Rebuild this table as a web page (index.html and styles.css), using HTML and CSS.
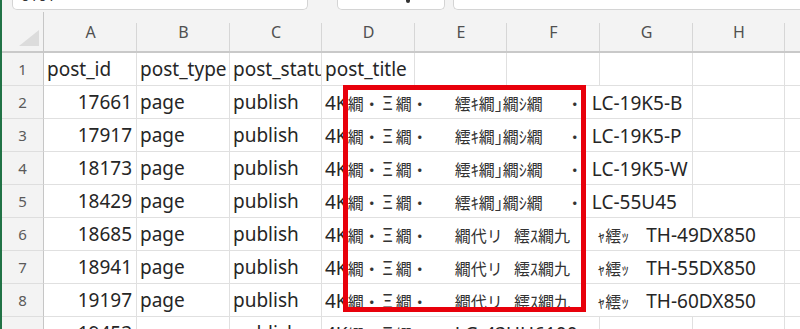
FILE: index.html
```html
<!DOCTYPE html>
<html lang="ja">
<head>
<meta charset="utf-8">
<title>Sheet</title>
<link rel="stylesheet" href="styles.css">
</head>
<body>
<div class="app">
  <div class="topbar">
    <div class="box namebox"><span class="clipped">0101</span></div>
    <div class="box fxbox"><span class="chev"></span></div>
    <div class="box formula"></div>
  </div>
  <div class="sheet">
    <div class="corner"></div>
    <div class="ch">A</div><div class="ch">B</div><div class="ch">C</div><div class="ch">D</div><div class="ch">E</div><div class="ch">F</div><div class="ch">G</div><div class="ch">H</div><div class="ch"></div>

    <div class="rh">1</div>
    <div class="c">post_id</div><div class="c">post_type</div><div class="c">post_status</div><div class="c">post_title</div><div class="c"></div><div class="c"></div><div class="c"></div><div class="c"></div><div class="c"></div>

    <div class="rh">2</div>
    <div class="c num">17661</div><div class="c">page</div><div class="c">publish</div>
    <div class="c s4">4K<span class="jp">繝・<span class="gk">Ξ</span>繝・&#8195;&#8194;&#8201;繧ｷ繝｣繝ｼ繝&#8195;&#8194;・&#8194;&#8202;</span>LC-19K5-B</div><div class="c"></div><div class="c"></div>

    <div class="rh">3</div>
    <div class="c num">17917</div><div class="c">page</div><div class="c">publish</div>
    <div class="c s4">4K<span class="jp">繝・<span class="gk">Ξ</span>繝・&#8195;&#8194;&#8201;繧ｷ繝｣繝ｼ繝&#8195;&#8194;・&#8194;&#8202;</span>LC-19K5-P</div><div class="c"></div><div class="c"></div>

    <div class="rh">4</div>
    <div class="c num">18173</div><div class="c">page</div><div class="c">publish</div>
    <div class="c s4">4K<span class="jp">繝・<span class="gk">Ξ</span>繝・&#8195;&#8194;&#8201;繧ｷ繝｣繝ｼ繝&#8195;&#8194;・&#8194;&#8202;</span>LC-19K5-W</div><div class="c"></div><div class="c"></div>

    <div class="rh">5</div>
    <div class="c num">18429</div><div class="c">page</div><div class="c">publish</div>
    <div class="c s4">4K<span class="jp">繝・<span class="gk">Ξ</span>繝・&#8195;&#8194;&#8201;繧ｷ繝｣繝ｼ繝&#8195;&#8194;・&#8194;&#8202;</span>LC-55U45</div><div class="c"></div><div class="c"></div>

    <div class="rh">6</div>
    <div class="c num">18685</div><div class="c">page</div><div class="c">publish</div>
    <div class="c s5">4K<span class="jp">繝・<span class="gk">Ξ</span>繝・&#8195;&#8194;&#8201;繝代リ&#8194;&#8201;繧ｽ繝九&#8195;&#8194;&#8201;ｬ繧ｯ&#8195;&#8202;</span>TH-49DX850</div><div class="c"></div>

    <div class="rh">7</div>
    <div class="c num">18941</div><div class="c">page</div><div class="c">publish</div>
    <div class="c s5">4K<span class="jp">繝・<span class="gk">Ξ</span>繝・&#8195;&#8194;&#8201;繝代リ&#8194;&#8201;繧ｽ繝九&#8195;&#8194;&#8201;ｬ繧ｯ&#8195;&#8202;</span>TH-55DX850</div><div class="c"></div>

    <div class="rh">8</div>
    <div class="c num">19197</div><div class="c">page</div><div class="c">publish</div>
    <div class="c s5">4K<span class="jp">繝・<span class="gk">Ξ</span>繝・&#8195;&#8194;&#8201;繝代リ&#8194;&#8201;繧ｽ繝九&#8195;&#8194;&#8201;ｬ繧ｯ&#8195;&#8202;</span>TH-60DX850</div><div class="c"></div>

    <div class="rh">9</div>
    <div class="c num">19453</div><div class="c">page</div><div class="c">publish</div>
    <div class="c s3">4K<span class="jp">繝・<span class="gk">Ξ</span>繝・&#8195;&#8194;&#8201;</span>LG-43UH6100</div><div class="c"></div><div class="c"></div><div class="c"></div>
  </div>
  <div class="highlight"></div>
</div>
</body>
</html>
```

FILE: styles.css
```css
* { box-sizing: border-box; }
html, body { margin: 0; padding: 0; }
body {
  width: 800px;
  height: 329px;
  overflow: hidden;
  background: #ffffff;
  font-family: "Noto Sans", "Noto Sans CJK JP", sans-serif;
}
.app {
  position: relative;
  width: 800px;
  height: 329px;
  overflow: hidden;
  border-left: 2px solid #217346;
  background: #f3f3f3;
}
.topbar {
  height: 12px;
  display: flex;
  align-items: flex-start;
  background: #f3f3f3;
}
.box {
  height: 10px;
  background: #ffffff;
  border: 1px solid #d4d4d4;
  border-top: none;
  border-radius: 0 0 5px 5px;
  position: relative;
  overflow: hidden;
}
.namebox { margin-left: 10px; width: 296px; }
.fxbox { margin-left: 29px; width: 108px; }
.formula { margin-left: 8px; flex: 1; border-right: none; border-radius: 0 0 0 5px; }
.clipped {
  display: block;
  margin-top: -12px;
  margin-left: 8px;
  font-size: 15px;
  line-height: 15px;
  color: #333;
}
.chev {
  display: block;
  width: 4px;
  height: 3px;
  margin: 0 0 0 68px;
  background: #333;
  border-radius: 0 0 2px 2px;
}
.sheet {
  display: grid;
  grid-template-columns: 42px 93px 93px 92px 93px 92px 93px 93px 92px 93px;
  grid-template-rows: 41px repeat(9, 33px);
  width: 876px;
  background: #ffffff;
}
.corner {
  background: #f3f3f3;
  border-right: 1px solid #c6c6c6;
  border-bottom: 2px solid #c9c9c9;
  position: relative;
}
.corner::after {
  content: "";
  position: absolute;
  right: 4px;
  bottom: 5px;
  width: 20px;
  height: 16px;
  background: #dcdcdc;
  clip-path: polygon(100% 0, 100% 100%, 0 100%);
}
.ch {
  position: relative;
  background: #f3f3f3;
  border-bottom: 2px solid #c9c9c9;
  color: #505050;
  font-size: 16px;
  text-align: center;
  line-height: 40px;
}
.ch::after {
  content: "";
  position: absolute;
  right: 0;
  top: 11px;
  bottom: 0;
  width: 1px;
  background: #d6d6d6;
}
.rh {
  background: #f3f3f3;
  border-right: 1px solid #c6c6c6;
  border-bottom: 1px solid #dedede;
  color: #5a5a5a;
  font-size: 15px;
  text-align: center;
  line-height: 32px;
}
.c {
  border-right: 1px solid #e0e0e0;
  border-bottom: 1px solid #e0e0e0;
  color: #262626;
  font-size: 19px;
  line-height: 32px;
  padding: 0 3px 0 3px;
  white-space: pre;
  overflow: hidden;
}
.num { text-align: right; padding-right: 4px; }
.s3 { grid-column: span 3; }
.s4 { grid-column: span 4; }
.s5 { grid-column: span 5; }
.jp {
  font-family: "Noto Sans CJK JP", sans-serif;
  font-size: 16px;
  color: #333333;
}
.gk {
  display: inline-block;
  width: 16px;
  text-align: center;
  font-size: 18px;
}
.highlight {
  position: absolute;
  left: 341px;
  top: 85px;
  width: 243px;
  height: 227px;
  border: 5px solid #e8000b;
}
```
